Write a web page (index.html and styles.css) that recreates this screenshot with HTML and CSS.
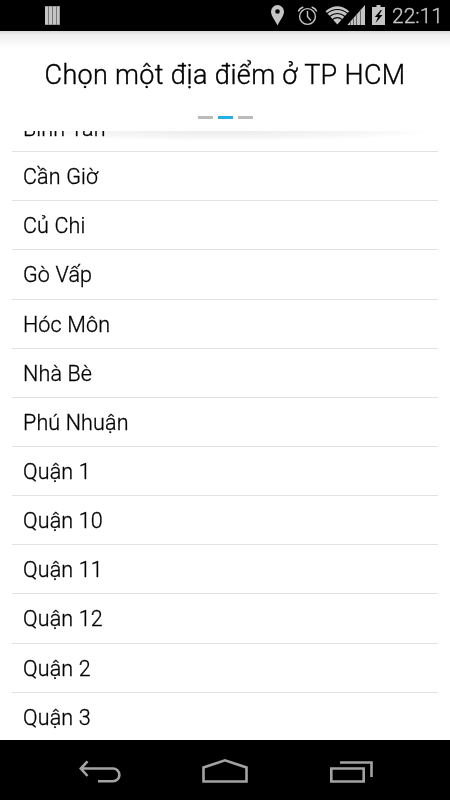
FILE: index.html
```html
<!DOCTYPE html>
<html lang="vi">
<head>
  <meta charset="UTF-8">
  <meta name="viewport" content="width=device-width, initial-scale=1.0">
  <title>Chọn một địa điểm</title>
  <link rel="stylesheet" href="styles.css">
</head>
<body>
  <div class="screen">
    <!-- Status bar -->
    <header class="status-bar">
      <svg class="status-icons" width="450" height="31" viewBox="0 0 450 31">
        <!-- Notification bars -->
        <path fill="#777" d="M45 6h15v19H45z"/>
        <path fill="#c4c4c4" d="M45 6.500h3v18h-3zM49 6.500h3v18h-3zM53 6.500h3v18h-3zM57 6.500h2.500v18H57z"/>
        <!-- Location -->
        <path fill="#c4c4c4" fill-rule="evenodd" d="M277.500 5a6.500 6.500 0 0 0-6.500 6.500c0 5 4.500 9 6.500 14 2-5 6.500-9 6.500-14a6.500 6.500 0 0 0-6.500-6.500zM277.500 9.200a2.300 2.300 0 1 1 0 4.600 2.300 2.300 0 0 1 0-4.600z"/>
        <!-- Alarm -->
        <g fill="none" stroke="#c4c4c4" stroke-width="1.400">
          <circle cx="307.500" cy="16.500" r="7.900"/>
          <path d="M307.500 11v5.500l3.300 4M298.300 11.500q1-3 5-4.500M316.700 11.500q-1-3-5-4.500"/>
        </g>
        <!-- Wifi -->
        <path fill="#c4c4c4" d="M325.500 11.200Q337.300 1.300 349.200 11.200L337.300 24.500z"/>
        <g fill="none" stroke="#000" stroke-width="1.200">
          <path d="M326.500 13.800Q337.300 5.200 348.200 13.800M329.200 16.800Q337.300 10.200 345.400 16.800M332 19.900Q337.300 15.500 342.600 19.900"/>
        </g>
        <!-- Signal -->
        <path fill="#c4c4c4" d="M347.300 25L365 5v20z"/>
        <path fill="none" stroke="#666" d="M350.500 21.500V25M353.500 18.500V25M356.500 15V25M360.500 10.500V25"/>
        <!-- Battery -->
        <path fill="#c4c4c4" d="M376.500 5h4v2h4.500v18h-13V7h4.500z"/>
        <path fill="#000" d="M380.800 10l-6 7h3.200l-2.500 6 7-8h-3.500l3-5z"/>
      </svg>
      <span class="clock">22:11</span>
    </header>

    <!-- Title and page indicator -->
    <section class="title-section">
      <h1>Chọn một địa điểm ở TP HCM</h1>
      <div class="pager">
        <span class="dash"></span>
        <span class="dash active"></span>
        <span class="dash"></span>
      </div>
    </section>

    <!-- District list -->
    <main class="list-section">
      <ul class="place-list">
        <li>Bình Tân</li>
        <li>Cần Giờ</li>
        <li>Củ Chi</li>
        <li>Gò Vấp</li>
        <li>Hóc Môn</li>
        <li>Nhà Bè</li>
        <li>Phú Nhuận</li>
        <li>Quận 1</li>
        <li>Quận 10</li>
        <li>Quận 11</li>
        <li>Quận 12</li>
        <li>Quận 2</li>
        <li>Quận 3</li>
      </ul>
    </main>

    <!-- Navigation bar -->
    <nav class="nav-bar">
      <svg width="450" height="60" viewBox="0 0 450 60" fill="none" stroke="#a3a3a3" stroke-width="2.600">
        <path d="M87.500 21.300l-6.700 7.200 6.700 7.500M80.500 28.500h32.500a6.400 6.400 0 0 1 0 12.800H98"/>
        <path d="M203.500 41.500V27.500L225 20.300l21.500 7.200v14z"/>
        <path d="M331.300 28.500h32.400v13h-32.400zM340 22.500h31.500V37"/>
      </svg>
    </nav>
  </div>
</body>
</html>
```

FILE: styles.css
```css
* {
    margin: 0;
    padding: 0;
    box-sizing: border-box;
}

body {
    background-color: #fff;
    font-family: Roboto, "Noto Sans", sans-serif;
    color: #000;
}

.screen {
    display: flex;
    flex-direction: column;
    width: 450px;
    height: 800px;
    overflow: hidden;
    will-change: transform;
}

/* Status bar */
.status-bar {
    display: flex;
    flex: none;
    height: 31px;
    background-color: #000;
}

.status-icons {
    flex: none;
    margin-right: -58px;
}

.clock {
    font-size: 21px;
    font-weight: 300;
    line-height: 33px;
    color: #c8c8c8;
    -webkit-text-stroke: 0.3px #c8c8c8;
    white-space: nowrap;
}

/* Title */
.title-section {
    display: flex;
    flex: none;
    flex-direction: column;
    align-items: center;
    height: 100px;
    background: linear-gradient(#d8d8d8, #eee 4px, #fff 17px);
}

.title-section h1 {
    margin-top: 28px;
    font-size: 27px;
    font-weight: 300;
    line-height: 32px;
    letter-spacing: 0.33px;
    -webkit-text-stroke: 0.35px #000;
    white-space: nowrap;
}

.pager {
    display: flex;
    gap: 5px;
    margin-top: 25px;
}

.dash {
    width: 15px;
    height: 3px;
    background-color: #bbb;
}

.dash.active {
    background-color: #28b0e6;
}

/* List */
.list-section {
    position: relative;
    flex: 1;
    min-height: 0;
    padding: 0 12px;
    overflow: hidden;
}

/* Fading shadow under the title */
.list-section::before {
    content: "";
    position: absolute;
    top: 0;
    left: 12px;
    right: 12px;
    height: 10px;
    background: radial-gradient(ellipse 50% 100% at 50% 0, rgba(0, 0, 0, 0.08), rgba(0, 0, 0, 0.04) 60%, rgba(0, 0, 0, 0));
}

.place-list {
    margin-top: -28px;
    list-style: none;
}

.place-list li {
    height: 49.15px;
    padding-left: 11px;
    border-bottom: 1px solid #e2e2e2;
    font-size: 21.5px;
    font-weight: 300;
    line-height: 49px;
    letter-spacing: 0.15px;
    -webkit-text-stroke: 0.3px #000;
}

.place-list li:first-child {
    line-height: 51px;
}

/* Navigation bar */
.nav-bar {
    flex: none;
    height: 60px;
    background-color: #000;
}
```
